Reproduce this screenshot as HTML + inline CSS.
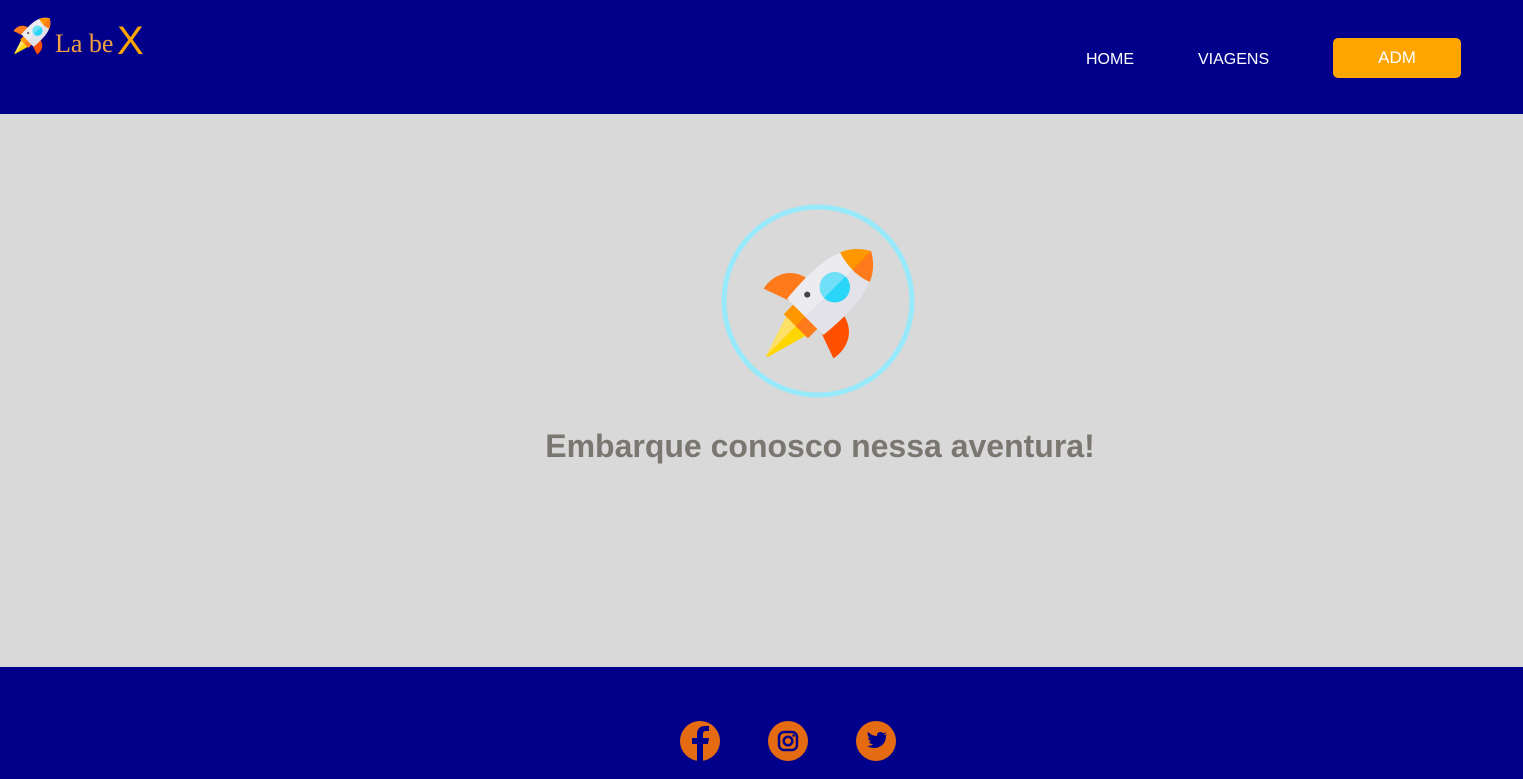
<!DOCTYPE html>
<html><head><meta charset="utf-8">
<style>
*{margin:0;padding:0;box-sizing:border-box}
body{width:1523px;height:779px;overflow:hidden;font-family:"Liberation Sans",Arial,sans-serif;background:#d9d9d9;position:relative}
header{position:absolute;left:0;top:0;width:1523px;height:114px;background:#00008b}
footer{position:absolute;left:0;top:667px;width:1523px;height:112px;background:#00008b}
.nav{position:absolute;color:#fff;font-size:16px;top:51px}
.adm{position:absolute;left:1333px;top:38px;width:128px;height:40px;background:#ffa500;border-radius:5px;color:#fff;font-size:17px;text-align:center;line-height:40px}
h1{position:absolute;left:0;width:1640px;text-align:center;top:428px;font-size:32px;color:#7a7670;font-weight:bold}
.logo1{position:absolute;left:55px;top:29px;font-family:"Liberation Serif",serif;font-size:26px;color:#f0a040}
.logo2{position:absolute;left:117px;top:19px;font-size:40px;color:#ffa500;font-weight:normal}
</style></head><body>
<svg width="0" height="0" style="position:absolute">
<defs>
<g id="rk">
<path d="M-27,0 C-50,5 -55,25 -52,40 L-24,30Z" fill="#ff7a1a"/>
<path d="M27,0 C50,5 55,25 52,40 L24,30Z" fill="#ff5000"/>
<path d="M-15,42 L15,42 L2,88 L0,88Z" fill="#ffd600"/>
<path d="M-15,42 L0,42 L0,88Z" fill="#ffe066"/>
<rect x="-18" y="28" width="36" height="16" fill="#ff9800"/>
<rect x="0" y="28" width="18" height="16" fill="#ff7a1a"/>
<path d="M0,-68 C26,-52 32,-25 27,30 L-27,30 C-32,-25 -26,-52 0,-68Z" fill="#ebebf0"/>
<path d="M0,-68 C26,-52 32,-25 27,30 L0,30Z" fill="#e2e2e8"/>
<path d="M0,-68 C12,-61 18,-53 22,-44 C9,-39 -9,-39 -22,-44 C-18,-53 -12,-61 0,-68Z" fill="#ff9800"/>
<path d="M0,-68 C12,-61 18,-53 22,-44 C14,-41 7,-40 0,-40Z" fill="#ff7a1a"/>
<circle cx="0" cy="-14" r="16" fill="#6fe0f8"/>
<path d="M0,-30 A16,16 0 0 1 0,2Z" fill="#29d6f7"/>
<circle cx="-15" cy="12" r="3.2" fill="#444"/>
</g>
</defs>
</svg>
<header>
<svg style="position:absolute;left:1px;top:2px" width="56" height="56"><g transform="translate(31,34) rotate(45) scale(0.32) translate(0,-10)"><use href="#rk"/></g></svg>
<div class="logo1">La be</div>
<div class="logo2">X</div>
<div class="nav" style="left:1086px">HOME</div>
<div class="nav" style="left:1198px">VIAGENS</div>
<div class="adm">ADM</div>
</header>
<svg style="position:absolute;left:0;top:0" width="1523" height="667">
<circle cx="818" cy="301" r="94" fill="none" stroke="#97eafb" stroke-width="5"/>
<g transform="translate(820,302) rotate(45) scale(0.95) translate(0,-8)"><use href="#rk"/></g>
</svg>
<h1>Embarque conosco nessa aventura!</h1>
<footer>
<svg style="position:absolute;left:0;top:0" width="1523" height="112">
<circle cx="700" cy="74" r="20" fill="#e56b12"/>
<path d="M703,94 V77 H708 L709,71 H703 V67 C703,65 704,64 706,64 H709 V59 H705 C700,59 697,62 697,67 V71 H692 V77 H697 V94Z" fill="#00008b"/>
<circle cx="788" cy="74" r="20" fill="#e56b12"/>
<rect x="779" y="65" width="18" height="18" rx="5" fill="none" stroke="#00008b" stroke-width="2.5"/>
<circle cx="788" cy="74" r="4.3" fill="none" stroke="#00008b" stroke-width="2.5"/>
<circle cx="793.5" cy="68.5" r="1.3" fill="#00008b"/>
<circle cx="876" cy="74" r="20" fill="#e56b12"/>
<path d="M887,67 C886,68 885,68 884,68 C885,67 886,66 886,65 C885,66 884,66 883,66 C881,64 877,65 877,68 V69 C873,69 870,67 868,65 C867,67 868,70 870,71 C869,71 868,71 868,70 C868,72 869,74 871,74 C870,75 869,75 869,75 C869,76 871,77 873,77 C871,79 869,79 867,79 C876,84 886,79 886,69 C886,68 887,68 887,67Z" fill="#00008b"/>
</svg>
</footer>
</body></html>
